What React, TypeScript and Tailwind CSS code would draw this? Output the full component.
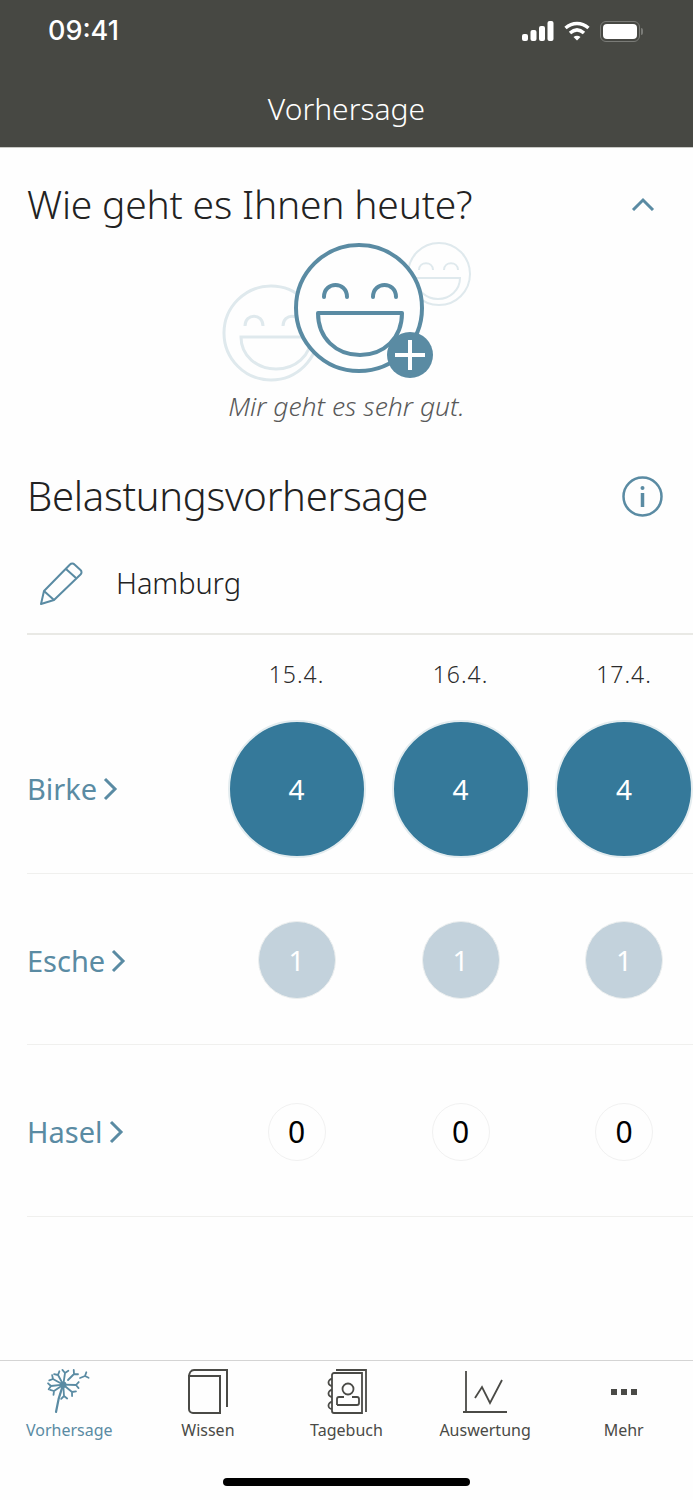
const font = "font-['Noto_Sans','Open_Sans',sans-serif]"
const cols = ["w-[165px]", "w-[163px]", "w-[164px]"]

function Chevron({ className }: { className: string }) {
  return (
    <svg viewBox="0 0 15 24" className={className} fill="none" stroke="#5a8ba3" strokeWidth="3">
      <path d="M2 2l10 10-10 10" />
    </svg>
  )
}

function Smileys() {
  return (
    <svg width="290" height="160" viewBox="0 0 290 160" fill="none" className="block">
      <g stroke="#dfe9ed">
        <g strokeWidth="2">
          <circle cx="238" cy="44" r="31" fill="#fefefe" />
          <path d="M218 40c0-9 14-9 14 0M243 40c0-9 14-9 14 0" />
          <path d="M215 48h44c0 12-10 21-22 21s-22-9-22-21z" />
        </g>
        <g strokeWidth="3">
          <circle cx="70" cy="103" r="47" fill="#fefefe" />
          <path d="M44 96c0-13 18-13 18 0M82 96c0-13 18-13 18 0" />
          <path d="M40 107h70c0 19-16 32-35 32s-35-13-35-32z" />
        </g>
      </g>
      <g stroke="#5a8ba3" strokeWidth="4" strokeLinecap="round">
        <circle cx="158" cy="78" r="63" fill="#fefefe" />
        <path d="M123 67c0-16 23-16 23 0M172 67c0-16 23-16 23 0" />
        <path d="M117 83h84c0 25-18 42-42 42s-42-17-42-42z" strokeLinejoin="round" />
      </g>
      <circle cx="209" cy="125" r="23" fill="#5a8ba3" />
      <path d="M194 125h30M209 110v30" stroke="#fff" strokeWidth="4" />
    </svg>
  )
}

function Dandelion() {
  const cx = 63.3
  const cy = 1384.7
  const seeds: [number, number][] = [
    [53, 1379], [51, 1386], [54, 1391], [58, 1375], [65, 1373], [76, 1385], [72, 1392], [64, 1396],
  ]
  const floating: [number, number, number, number][] = [
    [68, 1380, 74, 1374],
    [80, 1378, 85, 1376],
  ]
  const arms = (fromX: number, fromY: number, x: number, y: number) => {
    const a = Math.atan2(y - fromY, x - fromX)
    const l = 4
    return `M${x + l * Math.cos(a + 0.85)} ${y + l * Math.sin(a + 0.85)}L${x} ${y}L${x + l * Math.cos(a - 0.85)} ${y + l * Math.sin(a - 0.85)}`
  }
  return (
    <svg width="50" height="46" viewBox="44 1368 50 46" fill="none" stroke="#5a8ba3" strokeWidth="1.800" strokeLinecap="round" strokeLinejoin="round">
      <circle cx={cx} cy={cy} r="3.200" fill="#5a8ba3" stroke="none" />
      <path d="M63 1385c-3 8-5.500 17-7 27" strokeWidth="2.200" />
      {seeds.map(([x, y], i) => (
        <path key={i} d={`M${cx} ${cy}L${x} ${y}${arms(cx, cy, x, y)}`} />
      ))}
      {floating.map(([a, b, x, y], i) => (
        <path key={i} d={`M${a} ${b}L${x} ${y}${arms(a, b, x, y)}`} />
      ))}
    </svg>
  )
}

function BookIcon() {
  return (
    <svg width="50" height="46" viewBox="0 0 50 46" fill="none" stroke="#4a4a46" strokeWidth="2">
      <path d="M6 9c0-4 2-7 5-7h33v37" />
      <path d="M6 8h31v37H10a4 4 0 0 1-4-4z" />
    </svg>
  )
}

function NotebookIcon() {
  return (
    <svg width="50" height="46" viewBox="0 0 50 46" fill="none" stroke="#4a4a46" strokeWidth="1.800">
      <path d="M15 2h30v42" />
      <path d="M11 7a2 2 0 0 1 2-2h28v40H13a2 2 0 0 1-2-2z" />
      <path d="M11 11a3.500 3.500 0 1 0 0 7M11 22a3.500 3.500 0 1 0 0 7M11 34a3.500 3.500 0 1 0 0 7" />
      <circle cx="27" cy="21" r="5.500" />
      <path d="M16 37v-6a2 2 0 0 1 2-2h5M31 29h5a2 2 0 0 1 2 2v4a2 2 0 0 1-2 2H16" />
    </svg>
  )
}

function ChartIcon() {
  return (
    <svg width="50" height="46" viewBox="0 0 50 46" fill="none" stroke="#4a4a46" strokeWidth="1.800">
      <path d="M6 3v41M3 44h44" />
      <path d="M15 30l7-11 8 16 12-23" />
    </svg>
  )
}

function DotsIcon() {
  return (
    <div className="h-[46px] flex items-center justify-center gap-[4px] pt-[1px]">
      <div className="w-[6px] h-[6px] bg-[#4a4a46]" />
      <div className="w-[6px] h-[6px] bg-[#4a4a46]" />
      <div className="w-[6px] h-[6px] bg-[#4a4a46]" />
    </div>
  )
}

function Dates() {
  return (
    <div className="flex pl-[214px] h-[67px] pt-[12px] items-center text-[#2b2b2b] text-[23px] font-light tracking-[1px] shrink-0">
      {["15.4.", "16.4.", "17.4."].map((d, i) => (
        <div key={d} className={`${cols[i]} shrink-0 text-center`}>{d}</div>
      ))}
    </div>
  )
}

function Circle({ value }: { value: number }) {
  if (value === 4) {
    return (
      <div className="w-[138px] h-[138px] rounded-full bg-[#35799a] border-2 border-[#e3ecef] flex items-center justify-center text-white text-[28px]">
        {value}
      </div>
    )
  }
  if (value === 1) {
    return (
      <div className="w-[78px] h-[78px] rounded-full bg-[#c3d2dc] border border-[#ecefef] flex items-center justify-center text-white text-[28px]">
        {value}
      </div>
    )
  }
  return (
    <div className="w-[58px] h-[58px] rounded-full bg-[#fefefe] border border-[#f1f1f1] flex items-center justify-center text-black text-[30px]">
      {value}
    </div>
  )
}

function Row({ name, value }: { name: string; value: number }) {
  return (
    <div className="flex items-center h-[171.500px] pt-[3px] ml-[27px] border-b border-[#f0f0ee] shrink-0">
      <div className="w-[187px] shrink-0 flex items-center gap-[6px] text-[#5a8ba3] text-[29px]">
        {name}
        <Chevron className="w-[15px] h-[24px] mt-[1px]" />
      </div>
      {cols.map((c) => (
        <div key={c} className={`${c} shrink-0 flex justify-center`}>
          <Circle value={value} />
        </div>
      ))}
    </div>
  )
}

function Tab({ label, active, children }: { label: string; active?: boolean; children: React.ReactNode }) {
  return (
    <div className="flex flex-col items-center">
      <div className="h-[46px] flex justify-center">{children}</div>
      <div className={`text-[16px] leading-[22px] mt-[5px] ${active ? "text-[#5a8ba3]" : "text-[#4a4a46]"}`}>{label}</div>
    </div>
  )
}

export default function App() {
  return (
    <div className={`w-[693px] h-[1500px] bg-[#fefefe] flex flex-col overflow-hidden ${font}`}>
      <header className="h-[148px] shrink-0 bg-[#474843] border-b border-[#c9c9c5] text-white">
        <div className="h-[62px] flex items-center justify-between pl-[48px] pr-[50px]">
          <span className="font-['Inter',sans-serif] text-[27px] font-medium">09:41</span>
          <div className="flex items-center gap-[10px]">
            <svg width="32" height="20" viewBox="0 0 32 20" fill="#fff">
              <rect x="0" y="13" width="6" height="7" rx="2" />
              <rect x="8.500" y="9" width="6" height="11" rx="2" />
              <rect x="17" y="5" width="6" height="15" rx="2" />
              <rect x="25.500" y="0" width="6" height="20" rx="2" />
            </svg>
            <svg width="26" height="20" viewBox="0 0 26 20" fill="none" stroke="#fff" strokeWidth="3.500">
              <path d="M1.500 7c7-6 16-6 23 0M6 12c4.500-4 9.500-4 14 0" />
              <path d="M13 19.500l-3.500-3.500c2-1.600 5-1.600 7 0z" fill="#fff" stroke="none" />
            </svg>
            <div className="flex items-center">
              <div className="w-[40px] h-[21px] rounded-[6px] border border-[#7a7b77] p-[2px]">
                <div className="w-full h-full rounded-[4px] bg-white" />
              </div>
              <div className="w-[2px] h-[7px] bg-[#7a7b77] rounded-r-[2px] ml-[1px]" />
            </div>
          </div>
        </div>
        <div className="h-[62px] pt-[31px] flex items-center justify-center text-[30px] font-light">Vorhersage</div>
      </header>

      <div className="flex items-center justify-between h-[60px] mt-[26px] pl-[27px] pr-[38px] shrink-0">
        <h1 className="text-[39px] font-light text-[#222] tracking-[-0.200px]">Wie geht es Ihnen heute?</h1>
        <svg width="24" height="14" viewBox="0 0 24 14" fill="none" stroke="#5a8ba3" strokeWidth="3">
          <path d="M2 13L12 3l10 10" />
        </svg>
      </div>

      <div className="flex justify-center mr-[1px] mt-[-4px] shrink-0">
        <Smileys />
      </div>
      <p className="text-center italic text-[26.500px] font-light text-[#595959] leading-[36px] mt-[-2px] shrink-0">Mir geht es sehr gut.</p>

      <div className="flex items-center justify-between h-[60px] mt-[42px] pl-[27px] pr-[30px] shrink-0">
        <h2 className="text-[40px] font-light text-[#222] tracking-[-0.300px]">Belastungsvorhersage</h2>
        <svg width="41" height="41" viewBox="0 0 41 41" fill="none" stroke="#5a8ba3">
          <circle cx="20.500" cy="20.500" r="19" strokeWidth="2.500" />
          <circle cx="20.500" cy="12" r="2" fill="#5a8ba3" stroke="none" />
          <path d="M20.500 17v14" strokeWidth="3.500" />
        </svg>
      </div>

      <div className="flex items-center h-[102px] ml-[27px] mt-[7px] pl-[13px] border-b-2 border-[#e9e9e5] shrink-0">
        <svg width="44" height="44" viewBox="0 0 44 44" fill="none" stroke="#5a8ba3" strokeWidth="2" strokeLinejoin="round" className="mb-[1px]">
          <path d="M1 43l3-13L30 3.500a3 3 0 0 1 4.500 0l6 5.500a3 3 0 0 1 0 4.500L14 39z" />
          <path d="M4 30l10 9M26 8l10 9" />
        </svg>
        <span className="ml-[32px] text-[29px] font-light text-[#222] tracking-[-0.100px]">Hamburg</span>
      </div>

      <Dates />
      <Row name="Birke" value={4} />
      <Row name="Esche" value={1} />
      <Row name="Hasel" value={0} />

      <nav className="mt-auto h-[140px] shrink-0 border-t border-[#d4d4d4] relative">
        <div className="grid grid-cols-5 pt-[7px]">
          <Tab label="Vorhersage" active><Dandelion /></Tab>
          <Tab label="Wissen"><BookIcon /></Tab>
          <Tab label="Tagebuch"><NotebookIcon /></Tab>
          <Tab label="Auswertung"><ChartIcon /></Tab>
          <Tab label="Mehr"><DotsIcon /></Tab>
        </div>
        <div className="absolute left-[223px] bottom-[14px] w-[247px] h-[8px] rounded-full bg-black" />
      </nav>
    </div>
  )
}
